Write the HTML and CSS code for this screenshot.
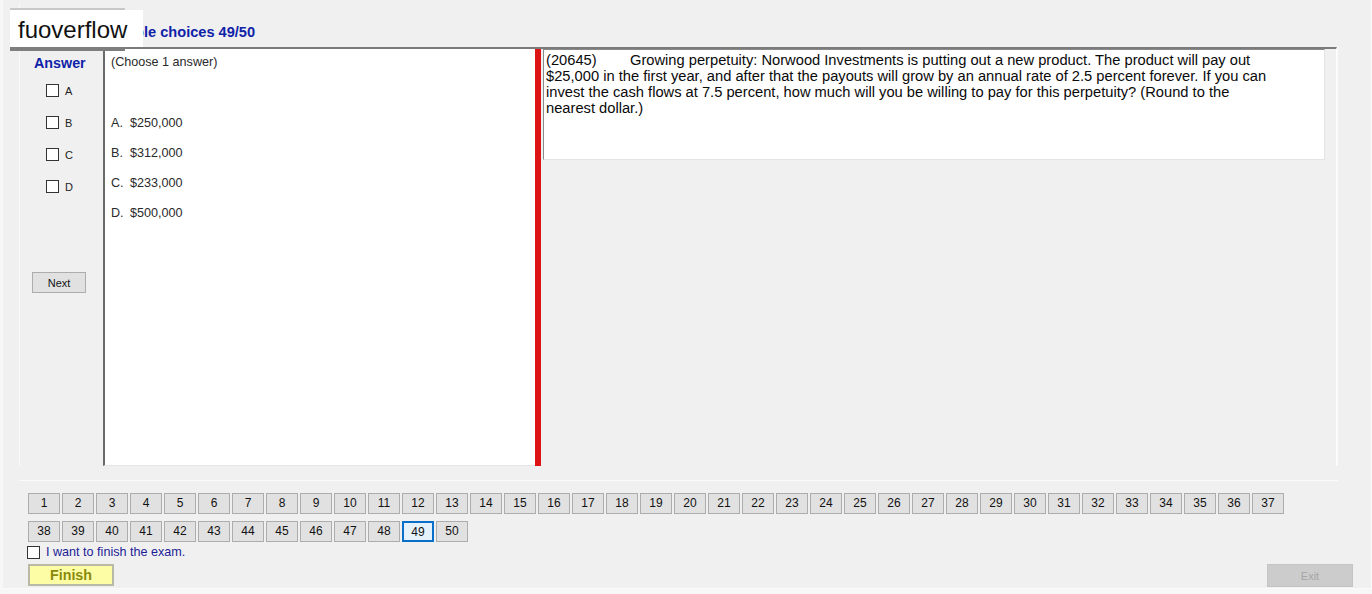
FILE: index.html
```html
<!DOCTYPE html>
<html>
<head>
<meta charset="utf-8">
<link rel="stylesheet" href="styles.css">
</head>
<body>
<div class="screen">
  <div class="upper">
    <div class="title">Multiple choices 49/50</div>
    <div class="main">
      <div class="side">
        <div class="answer-label">Answer</div>
        <div class="opt"><span class="cb"></span><span>A</span></div>
        <div class="opt"><span class="cb"></span><span>B</span></div>
        <div class="opt"><span class="cb"></span><span>C</span></div>
        <div class="opt"><span class="cb"></span><span>D</span></div>
        <button class="btn next">Next</button>
      </div>
      <div class="choices">
        <div class="hint">(Choose 1 answer)</div>
        <div class="choice-list">
          <div class="choice"><span class="letter">A.</span>$250,000</div>
          <div class="choice"><span class="letter">B.</span>$312,000</div>
          <div class="choice"><span class="letter">C.</span>$233,000</div>
          <div class="choice"><span class="letter">D.</span>$500,000</div>
        </div>
      </div>
      <div class="splitter"></div>
      <div class="question-area">
        <div class="question"><span class="qid">(20645)</span>Growing perpetuity: Norwood Investments is putting out a new product. The product will pay out<br>$25,000 in the first year, and after that the payouts will grow by an annual rate of 2.5 percent forever. If you can<br>invest the cash flows at 7.5 percent, how much will you be willing to pay for this perpetuity? (Round to the<br>nearest dollar.)</div>
      </div>
    </div>
  </div>
  <div class="lower">
    <div class="nav">
      <div class="nav-row">
        <button class="btn num">1</button><button class="btn num">2</button><button class="btn num">3</button><button class="btn num">4</button><button class="btn num">5</button><button class="btn num">6</button><button class="btn num">7</button><button class="btn num">8</button><button class="btn num">9</button><button class="btn num">10</button><button class="btn num">11</button><button class="btn num">12</button><button class="btn num">13</button><button class="btn num">14</button><button class="btn num">15</button><button class="btn num">16</button><button class="btn num">17</button><button class="btn num">18</button><button class="btn num">19</button><button class="btn num">20</button><button class="btn num">21</button><button class="btn num">22</button><button class="btn num">23</button><button class="btn num">24</button><button class="btn num">25</button><button class="btn num">26</button><button class="btn num">27</button><button class="btn num">28</button><button class="btn num">29</button><button class="btn num">30</button><button class="btn num">31</button><button class="btn num">32</button><button class="btn num">33</button><button class="btn num">34</button><button class="btn num">35</button><button class="btn num">36</button><button class="btn num">37</button>
      </div>
      <div class="nav-row">
        <button class="btn num">38</button><button class="btn num">39</button><button class="btn num">40</button><button class="btn num">41</button><button class="btn num">42</button><button class="btn num">43</button><button class="btn num">44</button><button class="btn num">45</button><button class="btn num">46</button><button class="btn num">47</button><button class="btn num">48</button><button class="btn num current">49</button><button class="btn num">50</button>
      </div>
    </div>
    <div class="finish-check"><span class="cb small"></span><span>I want to finish the exam.</span></div>
    <div class="actions">
      <button class="btn finish">Finish</button>
      <button class="btn exit">Exit</button>
    </div>
  </div>
  <div class="watermark">fuoverflow</div>
</div>
</body>
</html>
```
FILE: styles.css
```css
* { box-sizing: border-box; }
html, body {
  margin: 0;
  padding: 0;
  background: #f7f7f7;
  font-family: "Liberation Sans", Arial, sans-serif;
  color: #111;
}
.screen {
  position: relative;
  width: 1369px;
  height: 589px;
  margin-left: 3px;
  background: #f0f0f0;
  border-right: 1px solid #fbfbfb;
  border-bottom: 1px solid #fbfbfb;
}
.upper {
  margin-left: 1px;
  padding-top: 4px;
  padding-bottom: 15px;
  width: 1348px;
}
.title {
  height: 43px;
  margin-left: 15px;
  padding-top: 20px;
  padding-left: 81px;
  font-size: 14.6px;
  line-height: 17px;
  font-weight: bold;
  color: #0f22a8;
  border-left: 1px solid #fafafa;
}
.main {
  display: flex;
  height: 419px;
  margin-left: 15px;
  width: 1319px;
  border-left: 1px solid #fafafa;
  border-right: 1px solid #fafafa;
  box-shadow: 0 14px 0 0 #f0f0f0, 0 15px 0 0 #fafafa;
}
.side {
  width: 83px;
  flex: none;
  display: flex;
  flex-direction: column;
  padding-top: 8px;
}
.answer-label {
  padding-left: 14px;
  font-size: 14.3px;
  line-height: 16px;
  font-weight: bold;
  color: #0f22a8;
  margin-bottom: 13px;
}
.opt {
  display: flex;
  align-items: center;
  gap: 6px;
  height: 13px;
  margin-left: 26px;
  margin-bottom: 19px;
  font-size: 11px;
  color: #222;
}
.cb {
  display: inline-block;
  width: 13px;
  height: 13px;
  border: 1px solid #333;
  background: #fff;
  flex: none;
}
.btn {
  font-family: "Liberation Sans", Arial, sans-serif;
  background: #e1e1e1;
  border: 1px solid #adadad;
  color: #111;
  padding: 0;
  margin: 0;
  cursor: default;
}
.next {
  margin-top: 60px;
  margin-left: 12px;
  width: 54px;
  height: 21px;
  font-size: 11px;
}
.choices {
  width: 432px;
  flex: none;
  background: #fff;
  border-left: 2px solid #6a6a6a;
  border-top: 2px solid #7b7b7b;
  border-bottom: 1px solid #e6e6e6;
  padding-left: 6px;
  padding-top: 5px;
  font-size: 12.6px;
  color: #2a2a2a;
}
.hint { line-height: 16px; }
.choice-list {
  margin-top: 45px;
  display: flex;
  flex-direction: column;
  gap: 14px;
}
.choice { line-height: 16px; }
.letter {
  display: inline-block;
  width: 19px;
}
.splitter {
  width: 6px;
  flex: none;
  background: #dc1414;
  border-top: 2px solid #7b7b7b;
}
.question-area {
  flex: 1;
  border-top: 2px solid #7b7b7b;
  padding-left: 2px;
  border-right: 1px solid #fdfdfd;
}
.question {
  width: 782px;
  height: 111px;
  background: #fff;
  border-top: 1px solid #8a8a8a;
  border-left: 1px solid #8a8a8a;
  border-right: 1px solid #e4e4e4;
  border-bottom: 1px solid #e4e4e4;
  padding: 2px 0 0 2px;
  font-size: 14.7px;
  line-height: 16px;
  color: #0a0a0a;
  white-space: nowrap;
}
.qid {
  display: inline-block;
  width: 84px;
}
.lower {
  padding-top: 12px;
  padding-left: 25px;
  padding-right: 19px;
}
.nav {
  display: flex;
  flex-direction: column;
  gap: 7px;
}
.nav-row {
  display: flex;
  gap: 2px;
}
.num {
  width: 32px;
  height: 21px;
  font-size: 12px;
  line-height: 19px;
  text-align: center;
}
.num.current {
  border: 2px solid #0a6fc8;
  background: #e5f1fb;
}
.finish-check {
  display: flex;
  align-items: center;
  gap: 6px;
  margin-top: 3px;
  height: 14px;
  font-size: 12.6px;
  color: #1c1c96;
}
.cb.small {
  width: 13px;
  height: 13px;
  margin-left: -1px;
}
.actions {
  display: flex;
  justify-content: space-between;
  margin-top: 5px;
}
.finish {
  width: 86px;
  height: 22px;
  background: #fdfda6;
  border: 2px solid #b9b9a8;
  color: #8a8a0a;
  font-weight: bold;
  font-size: 14.3px;
}
.exit {
  width: 86px;
  height: 23px;
  margin-right: -1px;
  background: #cccccc;
  border: 1px solid #c4c4c4;
  color: #a6a6a6;
  font-size: 11px;
}
.watermark {
  position: absolute;
  left: 7px;
  top: 10px;
  width: 133px;
  height: 37px;
  padding-left: 8px;
  background: #fff;
  font-size: 24px;
  line-height: 40px;
  color: #111;
  z-index: 2;
}
.watermark::before {
  content: "";
  position: absolute;
  left: 0;
  top: 37px;
  width: 115px;
  height: 4px;
  background: #7e7e7e;
}
.watermark::after {
  content: "";
  position: absolute;
  left: 0;
  top: -2px;
  width: 115px;
  height: 2px;
  background: #c8c8c8;
}
```
